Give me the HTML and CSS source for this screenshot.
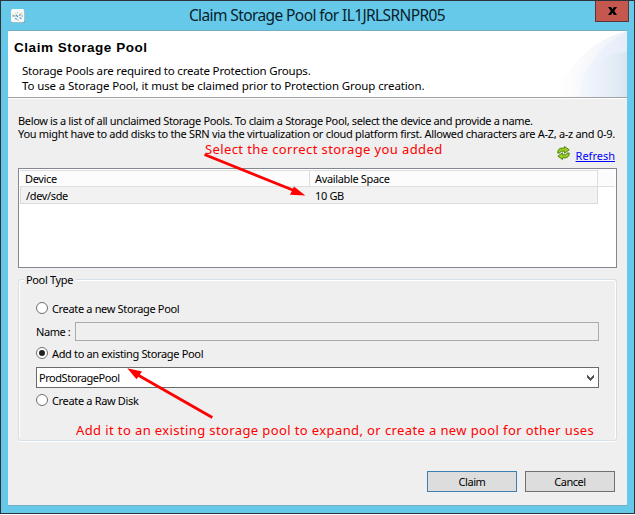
FILE: index.html
```html
<!DOCTYPE html>
<html lang="en">
<head>
<meta charset="utf-8">
<title>Claim Storage Pool</title>
<link rel="stylesheet" href="styles.css">
</head>
<body>
<div class="window">
  <header class="titlebar">
    <svg class="app-icon" width="14" height="14" viewBox="0 0 14 14">
      <rect x=".5" y=".5" width="14" height="14" rx="2" fill="#7fa9b8"/>
      <rect width="13.3" height="13.3" rx="1.8" fill="#f7f9f8"/>
      <path d="M1 5.500 3 6.500M4.500 4 5.500 5M11 4 9 6" stroke="#d9d291" stroke-width="1.200"/>
      <path d="M1.500 7h3M5 6l2 2M8 6.500l1.500-1M4 9.500l2 .8M8.500 8.500l2 1.200M10.500 7h1.500" stroke="#5a95b6" stroke-width="1.200"/>
      <path d="M6 11h2M6 3.500h1" stroke="#a7c8d6"/>
    </svg>
    <h1 class="title">Claim Storage Pool for IL1JRLSRNPR05</h1>
    <button class="close" aria-label="Close">
      <svg width="9" height="8" viewBox="0 0 9 8"><path d="M0 0h3l1.500 2.200L6 0h3L6.200 4 9 8H6L4.500 5.800 3 8H0l2.800-4z" fill="#000"/></svg>
    </button>
  </header>
  <main class="client">
    <section class="banner">
      <svg class="banner-art" width="80" height="66" viewBox="0 0 80 66">
        <defs>
          <linearGradient id="outer"><stop offset="0" stop-color="#fff"/><stop offset=".5" stop-color="#f8f8fb"/><stop offset="1" stop-color="#eef2fb"/></linearGradient>
          <linearGradient id="middle"><stop offset="0" stop-color="#f3f6fe"/><stop offset="1" stop-color="#e6ecf8"/></linearGradient>
          <linearGradient id="inner"><stop offset=".1" stop-color="#fff" stop-opacity="0"/><stop offset="1" stop-color="#d9e5f2"/></linearGradient>
        </defs>
        <path d="M8 66C20 36 45 8 80 0V66z" fill="url(#outer)"/>
        <path d="M32 66C34 40 52 13 80 1V66z" fill="url(#middle)"/>
        <path d="M8 66C25 42 50 24 80 21V66z" fill="url(#inner)"/>
      </svg>
      <h2 class="heading">Claim Storage Pool</h2>
      <p class="intro"><span class="intro-first">Storage Pools are required to create Protection Groups.</span><br><span>To use a Storage Pool, it must be claimed prior to Protection Group creation.</span></p>
    </section>
    <section class="content">
      <p class="description"><span>Below is a list of all unclaimed Storage Pools. To claim a Storage Pool, select the device and provide a name.</span><br><span class="desc-rules">You might have to add disks to the SRN via the virtualization or cloud platform first. Allowed characters are A-Z, a-z and 0-9.</span></p>
      <div class="toolbar">
        <span class="note note-select">Select the correct storage you added</span>
        <svg class="refresh-icon" width="13" height="14" viewBox="0 0 13 14">
          <path d="M.7 7C.5 3.800 2.500 2.100 5 2.100H7.500V.5L12.200 3.800 7.500 7.200V5.200H4.800C3.500 5.200 3 6 3 7z" fill="#9ccc22" stroke="#4b7f0d" stroke-width=".9"/>
          <path d="M12.300 7c.2 3.200-1.800 4.900-4.300 4.900H5.500v1.600L.8 10.200l4.700-3.400v2h2.700c1.300 0 1.800-.8 1.800-1.800z" fill="#9ccc22" stroke="#4b7f0d" stroke-width=".9"/>
        </svg>
        <a class="refresh" href="#">Refresh</a>
      </div>
      <div class="table">
        <div class="row head"><span class="cell">Device</span><span class="cell">Available Space</span><span></span></div>
        <div class="row item"><span class="cell">/dev/sde</span><span class="cell">10 GB</span></div>
      </div>
      <fieldset class="group">
        <legend class="legend">Pool Type</legend>
        <label class="option"><i class="radio"></i><span class="option-text">Create a new Storage Pool</span></label>
        <div class="name-row"><span class="name-label">Name :</span><div class="field"></div></div>
        <label class="option option-add"><i class="radio checked"></i><span class="option-text">Add to an existing Storage Pool</span></label>
        <div class="combo"><span>ProdStoragePool</span>
          <svg width="7" height="6" viewBox="0 0 7 6"><path d="M0 0h1v1h1v1h1v1h1V2h1V1h1V0h1v3H6v1H5v1H4v1H3V5H2V4H1V3H0z" fill="#555"/></svg>
        </div>
        <label class="option option-raw"><i class="radio"></i><span class="option-text">Create a Raw Disk</span></label>
        <p class="note note-add">Add it to an existing storage pool to expand, or create a new pool for other uses</p>
      </fieldset>
      <div class="actions"><button class="button primary">Claim</button><button class="button">Cancel</button></div>
    </section>
  </main>
</div>
<svg class="arrows" width="635" height="515" viewBox="0 0 635 515">
  <path d="M204.500 154.500 294 190.500M212.300 417.500 137 374.500" stroke="#f00" stroke-width="2.800"/>
  <path d="M305.300 195.500 290 194.700 294 186.500zM127.300 368.200 142 371.500 136.500 379.300z" fill="#f00"/>
</svg>
</body>
</html>
```
FILE: styles.css
```css
* { box-sizing: border-box; }
body { margin: 0; background: #fff; width: 635px; height: 515px; overflow: hidden; font: 11px/13px "Noto Sans", sans-serif; letter-spacing: -.35px; color: #000; }
h1, h2, p { margin: 0; font-weight: normal; }
span, a { white-space: nowrap; }
.window { width: 635px; height: 514px; border: 1px solid #2d3338; background: #66c9ea; padding: 0 7px 7px; display: flex; flex-direction: column; }
.titlebar { height: 29px; flex: none; display: grid; grid-template-columns: 29px 1fr 32px; }
.app-icon { margin: 8px 0 0 3px; }
.title { font-size: 15.5px; line-height: 29px; letter-spacing: -.6px; text-align: center; padding-left: 2px; color: #08222c; }
.close { width: 34px; height: 21px; border: 1px solid #5a3537; border-top: 0; background: #c4584f; padding: 0; display: flex; align-items: center; justify-content: center; }
.client { flex: 1; width: 619px; background: #efefef; border-top: 1px solid #75adc4; border-bottom: 1px solid #75adc4; display: flex; flex-direction: column; }
.banner { height: 67px; flex: none; position: relative; background: #fff; border-bottom: 1px solid #a0a0a0; padding: 8px 0 0 6px; }
.banner-art { position: absolute; right: 0; top: 0; }
.heading { font: bold 13.5px/18px "Liberation Sans", sans-serif; letter-spacing: .55px; }
.intro { position: relative; padding: 6px 0 0 8px; font-size: 11.5px; line-height: 15px; letter-spacing: -.11px; }
.intro-first { letter-spacing: -.19px; }
.content { border-top: 1px solid #fff; flex: 1; padding: 15px 10px 0; }
.desc-rules { letter-spacing: -.295px; }
.toolbar { height: 28px; display: flex; align-items: flex-start; padding-left: 187px; }
.note { color: #f00; font-size: 13px; line-height: 18px; letter-spacing: .39px; }
.refresh-icon { margin: 6px 6px 0 auto; }
.refresh { color: #00f; margin: 9px 2px 0 0; letter-spacing: 0; }
.table { height: 100px; width: 599px; border: 1px solid #828790; background: #fff; padding: 1px; }
.row { display: grid; grid-template-columns: 290px 288px 1fr; height: 17px; line-height: 17px; }
.head { background: #fcfcfc; line-height: 15px; }
.head > * { border-bottom: 1px solid #dedede; }
.head .cell { border-right: 1px solid #dedede; border-top: 1px solid #dedede; }
.cell { padding-left: 5px; }
.item { width: 578px; grid-template-columns: 289px 1fr; background: #f2f2f2; border: 1px solid #dadada; border-top: 0; }
.group { height: 168px; width: 599px; min-width: 0; margin: 5px 0 0; padding: 15px 17px 0; border: 1px solid #d5dfe5; border-radius: 3px; box-shadow: inset 1px 1px #fff, inset -1px 0 #fff, 0 1px #fff; }
.legend { padding: 0 3px 0 2px; margin-left: -12px; background: #efefef; }
.option { display: flex; align-items: center; gap: 4px; height: 14px; }
.option-text { padding-top: 1px; letter-spacing: -.34px; }
.radio { width: 12px; height: 12px; border: 1px solid #707070; border-radius: 50%; background: #fff; display: grid; place-items: center; }
.checked::after { content: ""; width: 6px; height: 6px; border-radius: 50%; background: #222; }
.name-row { display: flex; align-items: center; margin-top: 7px; height: 19px; }
.name-label { width: 39px; letter-spacing: -.45px; }
.field { flex: 1; height: 19px; border: 1px solid #ababab; }
.option-add { margin-top: 5px; }
.combo { display: flex; align-items: center; justify-content: space-between; height: 21px; border: 1px solid #6b6b6b; background: #fff; margin-top: 7px; padding: 0 4px 0 2px; letter-spacing: -.45px; }
.option-raw { margin-top: 5px; }
.note-add { padding: 14px 0 0 40px; white-space: nowrap; }
.actions { display: flex; justify-content: flex-end; gap: 8px; padding: 30px 2px 0 0; }
.button { width: 90px; height: 21px; border: 1px solid #707070; background: #ddd; font: inherit; letter-spacing: -.45px; padding: 0; }
.primary { border-color: #3c7fb1; }
.arrows { position: absolute; left: 0; top: 0; pointer-events: none; }
```
